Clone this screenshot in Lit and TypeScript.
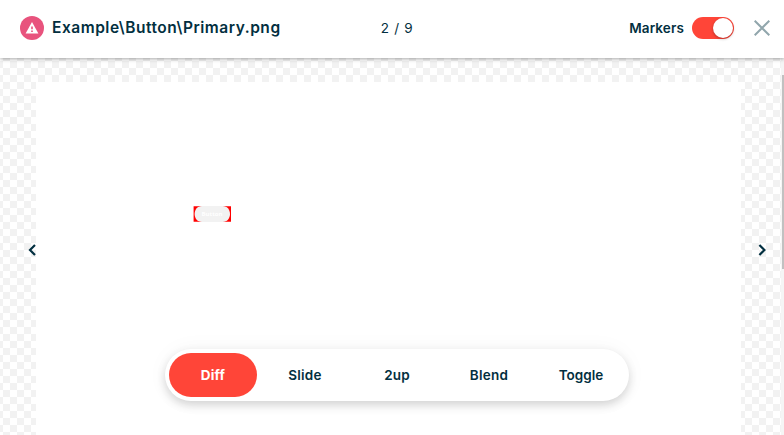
import { LitElement, html, css } from "lit";
import { customElement, state } from "lit/decorators.js";

const MODES = [
  { id: "Diff", spacing: "0.2px" },
  { id: "Slide", spacing: "0.25px" },
  { id: "2up", spacing: "0.1px" },
  { id: "Blend", spacing: "0.25px" },
  { id: "Toggle", spacing: "0px" },
];

@customElement("app-root")
export class AppRoot extends LitElement {
  @state() private mode = "Diff";
  @state() private markers = true;

  static styles = css`
    :host {
      display: flex;
      flex-direction: column;
      position: relative;
      height: 100vh;
      overflow: hidden;
      background: #fff;
      color: #022f40;
      font: 500 14px/20px Inter, "Liberation Sans", sans-serif;
    }
    * { box-sizing: border-box; }
    button { font: inherit; color: inherit; border: 0; padding: 0; background: none; cursor: pointer; }
    svg { display: block; }
    header {
      flex: none;
      display: grid;
      grid-template-columns: 1fr auto 1fr;
      align-items: center;
      height: 58px;
      padding: 0 14px 2px 20px;
      background: #fff;
      box-shadow: 0 1px 4px rgba(0, 0, 0, 0.35);
      z-index: 1;
    }
    .title { display: flex; align-items: center; gap: 8px; font-size: 15.5px; font-weight: 600; white-space: nowrap; }
    .name { letter-spacing: 0.53px; }
    .count { font-size: 13.5px; font-weight: 400; letter-spacing: 0.7px; white-space: pre; margin: 0 -2px 0 2px; }
    .actions { display: flex; align-items: center; justify-content: flex-end; }
    .label { font-size: 13.5px; font-weight: 600; letter-spacing: 0.12px; }
    .switch {
      width: 42px; height: 22px; margin: 0 20px 0 8px; padding: 1px;
      display: flex; justify-content: flex-end;
      border-radius: 11px; background: #ff4538;
    }
    .switch.off { justify-content: flex-start; background: #aaa; }
    .knob { width: 20px; height: 20px; border-radius: 50%; background: #fff; box-shadow: 0 1px 3px rgba(0, 0, 0, 0.3); }
    .stage {
      flex: 1;
      display: grid;
      grid-template-columns: 36px 1fr 43px;
      padding-top: 24px;
      background: repeating-conic-gradient(#f2f2f2 0 25%, #fff 0 50%) 3px 3px / 14px 14px;
    }
    .canvas { background: #fff; padding: 124px 0 0 157px; }
    .side { display: flex; align-items: flex-start; padding-top: 162px; }
    .left { justify-content: flex-end; }
    .right { padding-left: 17px; }
    .scroll { position: absolute; right: 0; top: 58px; width: 3px; height: 377px; background: #f5f5f5; }
    .thumb { width: 2px; height: 194px; margin: 17px 0 0 1px; background: #c1c1c1; }
    .modes {
      position: absolute; left: 165px; top: 349px;
      display: flex; gap: 4px; padding: 4px;
      border-radius: 26px; background: #fff;
      box-shadow: 0 4px 10px rgba(0, 0, 0, 0.16), 0 0 22px rgba(0, 0, 0, 0.04);
    }
    .mode { width: 88px; height: 44px; border-radius: 22px; font-weight: 600; font-size: 13.5px; }
    .active { background: #ff4538; color: #fff; font-weight: 700; }
  `;

  render() {
    return html`
      <header>
        <div class="title">
          <svg width="24" height="24" viewBox="0 0 24 24">
            <circle cx="12" cy="12" r="12" fill="#e8537d" />
            <path d="M12 6 18.4 17.5H5.6z" fill="#fff" />
            <path d="M11.2 10.4h1.6v2.9h-1.6zM11.2 14.5h1.6v1.5h-1.6z" fill="#e8537d" />
          </svg>
          <span class="name">Example\\Button\\Primary.png</span>
        </div>
        <span class="count">2 / 9</span>
        <div class="actions">
          <span class="label">Markers</span>
          <button class="switch ${this.markers ? "" : "off"}" aria-label="Markers"
            @click=${() => (this.markers = !this.markers)}><span class="knob"></span></button>
          <button aria-label="Close">
            <svg width="16" height="16" viewBox="0 0 16 16" fill="none" stroke="#91a6ac" stroke-width="2"><path d="M.7.7 15.3 15.3M15.3.7.7 15.3" /></svg>
          </button>
        </div>
      </header>
      <main class="stage">
        <div class="side left">
          <button aria-label="Previous"><svg width="8" height="12" viewBox="0 0 8 12" fill="none" stroke="#022f40" stroke-width="2.2"><path d="M7 1 2 6l5 5" /></svg></button>
        </div>
        <div class="canvas">
          <svg width="38" height="16" viewBox="0 0 38 16">
            <path d="M.6 .3H38v15.5H.6z" fill="#f00" />
            <path d="M9 0h20.6c4.4 0 7.4 3.6 7.4 8s-3 8-7.4 8H9c-4.4 0-7.4-3.6-7.4-8S4.600 0 9 0z" fill="#f2f2f2" />
            <text x="19" y="10.3" text-anchor="middle" font-family="Open Sans, sans-serif" font-size="6" font-weight="700" fill="#fff">Button</text>
          </svg>
        </div>
        <div class="side right">
          <button aria-label="Next"><svg width="8" height="12" viewBox="0 0 8 12" fill="none" stroke="#022f40" stroke-width="2.2"><path d="m1.400 1 5 5-5 5" /></svg></button>
        </div>
      </main>
      <div class="scroll"><div class="thumb"></div></div>
      <nav class="modes">
        ${MODES.map(
          (m) => html`<button class="mode ${m.id === this.mode ? "active" : ""}"
            style="letter-spacing:${m.spacing}" @click=${() => (this.mode = m.id)}>${m.id}</button>`
        )}
      </nav>
    `;
  }
}
